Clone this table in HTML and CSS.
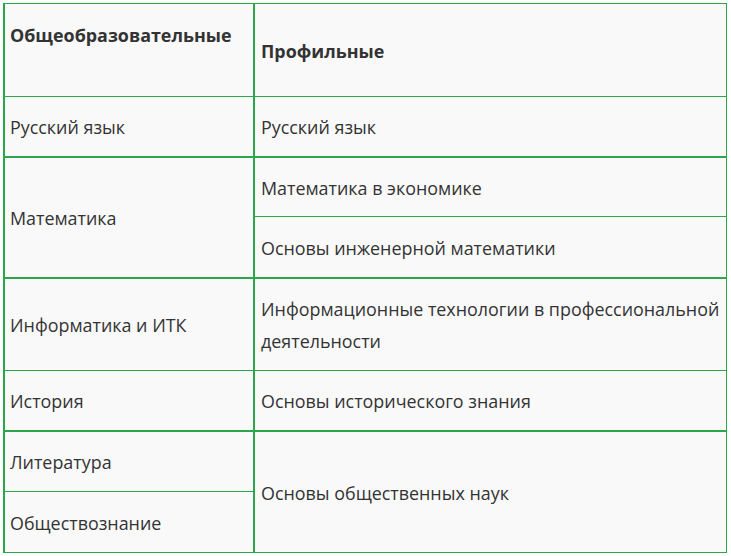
FILE: index.html
```html
<!DOCTYPE html>
<html lang="ru">
<head>
<meta charset="utf-8">
<link rel="stylesheet" href="styles.css">
</head>
<body>
<div class="subjects" role="table">
  <div class="cell col-a head line-1" role="columnheader">Общеобразовательные<br>&nbsp;</div>
  <div class="cell col-b head line-1" role="columnheader">Профильные</div>

  <div class="cell col-a line-2" role="cell">Русский язык</div>
  <div class="cell col-b line-2" role="cell">Русский язык</div>

  <div class="cell col-a span-2 line-2" role="cell">Математика</div>
  <div class="cell col-b line-1" role="cell">Математика в экономике</div>
  <div class="cell col-b line-2" role="cell">Основы инженерной математики</div>

  <div class="cell col-a line-1" role="cell">Информатика и ИТК</div>
  <div class="cell col-b line-1" role="cell">Информационные технологии в профессиональной деятельности</div>

  <div class="cell col-a line-2" role="cell">История</div>
  <div class="cell col-b line-2" role="cell">Основы исторического знания</div>

  <div class="cell col-a line-1" role="cell">Литература</div>
  <div class="cell col-b span-2" role="cell">Основы общественных наук</div>
  <div class="cell col-a" role="cell">Обществознание</div>
</div>
</body>
</html>
```

FILE: styles.css
```css
html, body {
  margin: 0;
  padding: 0;
  background: #ffffff;
}

body {
  padding: 3px 0 0 3px;
  font-family: "Open Sans", "Liberation Sans", sans-serif;
  font-size: 17.9px;
  line-height: 32px;
  color: #333333;
}

.subjects {
  display: grid;
  width: 724px;
  box-sizing: border-box;
  grid-template-columns: 250px 471px;
  grid-template-rows: 93px 61px 59px 62px 92px 61px 60px 60px;
  background: #f9f9f9;
  border-top: 1px solid #2ba64a;
  border-left: 2px solid #2ba64a;
  border-right: 1px solid #2ba64a;
  border-bottom: 1px solid #2ba64a;
}

.cell {
  display: flex;
  align-items: center;
  box-sizing: border-box;
  padding: 1px 6px 0 5px;
  min-width: 0;
}

.head {
  font-weight: 700;
}

.col-a {
  border-right: 2px solid #2ba64a;
}

.col-b {
  padding-left: 6px;
}

.span-2 {
  grid-row: span 2;
}

.line-1 {
  border-bottom: 1px solid #2ba64a;
}

.line-2 {
  border-bottom: 2px solid #2ba64a;
}
```
